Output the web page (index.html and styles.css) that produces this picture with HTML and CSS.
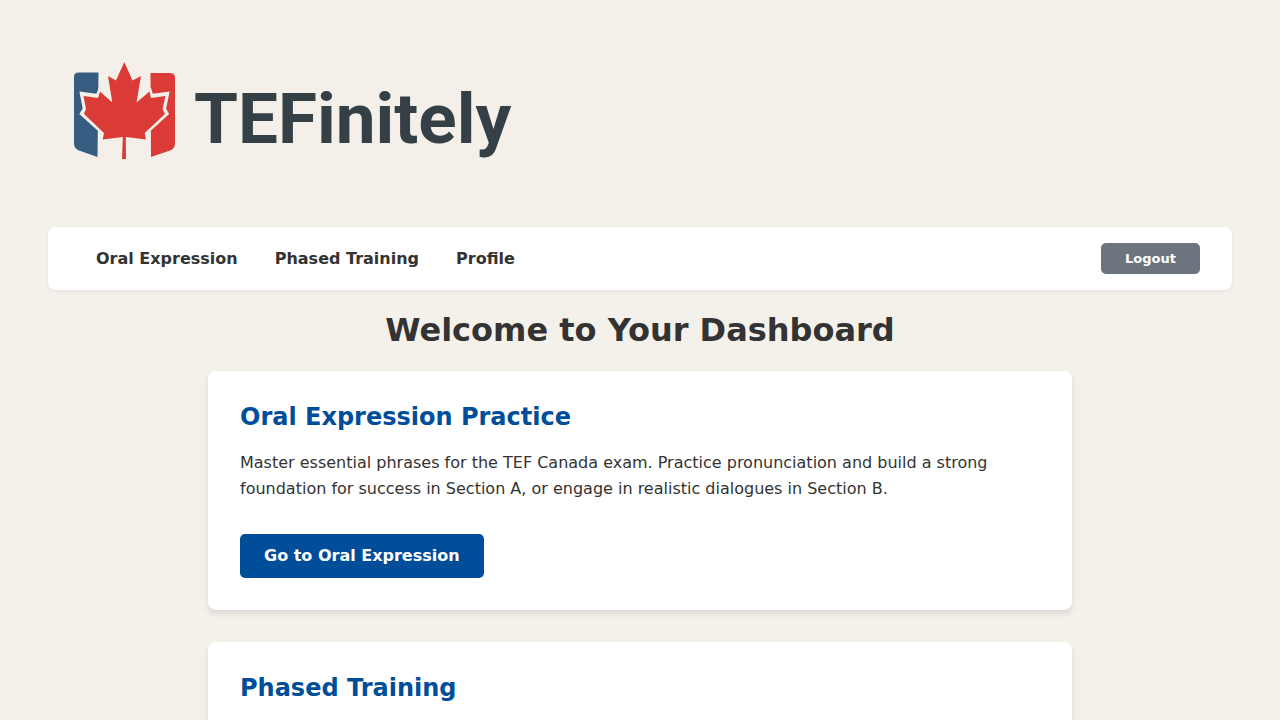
FILE: index.html
```html
<!DOCTYPE html>
<html lang="en">
<head>
  <meta charset="utf-8">
  <meta name="viewport" content="width=device-width, initial-scale=1">
  <title>TEFinitely Dashboard</title>
  <link rel="stylesheet" href="styles.css">
</head>
<body>
  <header class="site-header">
    <svg class="logo" viewBox="32 48 500 128" role="img" aria-label="TEFinitely">
      <path class="logo-blue" d="M78.500 72.500H98.500L97.500 157L79 150.500Q74 148.500 74 143.500V77Q74 72.500 78.500 72.500Z"/>
      <path class="logo-red" d="M150.500 73H170Q175 73 175 78V143.500Q175 148.500 170 150.500L151 157L150.500 73Z"/>
      <path class="logo-outline" d="M124.300 62L116 80.500L108 76L112.300 102.500L100 91.500L98 96.500L82.500 94.500L85.300 109L82.500 113.500L104 133L102.700 139.500L122.800 137L122 159H126L125.800 137L146 139.500L144.700 133L166 113.500L163.500 109L166.500 94.500L151 96.500L149.500 91.500L136.500 102.500L141 76L132.500 80.500Z"/>
      <path class="logo-red" d="M124.300 62L116 80.500L108 76L112.300 102.500L100 91.500L98 98L83.500 96L86 109L84 114L104 133L102.700 139.500L122.800 137L122 159H126L125.800 137L146 139.500L144.700 133L165 114L162.500 109L165.500 96L151 98L149.500 91.500L136.500 102.500L141 76L132.500 80.500Z"/>
      <text class="logo-text" x="194" y="143">TEFinitely</text>
    </svg>
  </header>
  <nav class="navbar">
    <div class="nav-links">
      <a href="#oral">Oral Expression</a>
      <a href="#phased">Phased Training</a>
      <a href="#profile">Profile</a>
    </div>
    <button class="logout" type="button">Logout</button>
  </nav>
  <main class="dashboard">
    <h1>Welcome to Your Dashboard</h1>
    <section class="card" id="oral">
      <h2>Oral Expression Practice</h2>
      <p>Master essential phrases for the TEF Canada exam. Practice pronunciation and build a strong foundation for success in Section A, or engage in realistic dialogues in Section B.</p>
      <a class="card-button" href="#oral">Go to Oral Expression</a>
    </section>
    <section class="card" id="phased">
      <h2>Phased Training</h2>
    </section>
  </main>
</body>
</html>
```
FILE: styles.css
```css
* {
  box-sizing: border-box;
}

body {
  margin: 0;
  background: #f4f1ea;
  color: #333;
  font-family: "DejaVu Sans", sans-serif;
  font-size: 16px;
  line-height: 26px;
}

.site-header {
  padding: 48px 32px 51px;
}

.logo {
  display: block;
  width: 500px;
  max-width: 100%;
  background: #f4f0e9;
}

.logo-blue {
  fill: #365d80;
}

.logo-red {
  fill: #da3b36;
}

.logo-outline {
  fill: #f4f0e9;
  stroke: #f4f0e9;
  stroke-width: 5px;
}

.logo-text {
  fill: #344046;
  font-family: Roboto, sans-serif;
  font-size: 71px;
  font-weight: 700;
}

.navbar {
  display: flex;
  justify-content: space-between;
  align-items: center;
  margin: 0 48px;
  padding: 16px 32px;
  background: #fff;
  border-radius: 8px;
  box-shadow: 0 2px 4px rgba(0, 0, 0, 0.05);
}

.nav-links {
  display: flex;
  gap: 37px;
  padding-left: 16px;
  line-height: 31px;
}

.nav-links a {
  color: #333;
  font-weight: 700;
  text-decoration: none;
}

.logout {
  padding: 8px 24px;
  border: 0;
  border-radius: 5px;
  background: #6c757d;
  color: #fff;
  font-family: inherit;
  font-size: 13px;
  font-weight: 700;
  line-height: 15px;
}

.dashboard {
  display: flex;
  flex-direction: column;
  gap: 32px;
  max-width: 896px;
  margin: 0 auto;
  padding: 15px 16px 32px;
}

h1 {
  margin: 0 0 -16px;
  font-size: 32px;
  line-height: 50px;
  text-align: center;
}

.card {
  padding: 32px;
  background: #fff;
  border-radius: 8px;
  box-shadow: 0 4px 6px rgba(0, 0, 0, 0.1);
}

.card h2 {
  margin: 0 0 19px;
  color: #004d99;
  font-size: 24px;
  line-height: 28px;
}

.card p {
  margin: 0 0 32px;
}

.card-button {
  display: inline-block;
  padding: 12px 24px;
  border-radius: 5px;
  background: #004d99;
  color: #fff;
  font-weight: 700;
  line-height: 20px;
  text-decoration: none;
  vertical-align: top;
}
```
